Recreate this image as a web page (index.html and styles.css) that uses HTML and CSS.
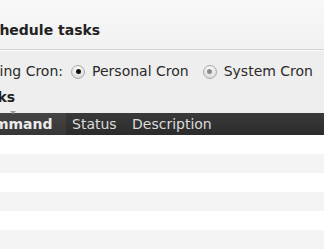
FILE: index.html
```html
<!DOCTYPE html>
<html>
<head>
    <title>Schedule tasks</title>
    <link rel="stylesheet" href="styles.css">
</head>
<body>
    <div class="page">
        <!-- Page header -->
        <div class="top">
            <h2 class="title">Schedule tasks</h2>
        </div>

        <!-- Cron type choice -->
        <div class="cron-row">
            <span class="cron-label">Using Cron:</span>
            <label class="opt"><span class="radio on"></span>Personal Cron</label>
            <label class="opt"><span class="radio"></span>System Cron</label>
        </div>

        <!-- Task list -->
        <h3 class="tasks">Tasks</h3>
        <table class="task-table">
            <thead>
                <tr>
                    <th class="col-cmd sorted"><span class="sort-text">Command<span class="sort-arrow"></span></span></th>
                    <th class="col-status">Status</th>
                    <th class="col-desc">Description</th>
                </tr>
            </thead>
            <tbody>
                <tr><td></td><td></td><td></td></tr>
                <tr><td></td><td></td><td></td></tr>
                <tr><td></td><td></td><td></td></tr>
                <tr><td></td><td></td><td></td></tr>
                <tr><td></td><td></td><td></td></tr>
                <tr><td></td><td></td><td></td></tr>
                <tr><td></td><td></td><td></td></tr>
            </tbody>
        </table>
    </div>
</body>
</html>
```

FILE: styles.css
```css
/* Global styles */
body {
    margin: 0;
    font-family: "DejaVu Sans", Verdana, sans-serif;
    font-size: 14px;
    line-height: 17px;
    color: #222;
    background-color: #eeeeee;
    overflow: hidden;
}

/* page is scrolled a little to the right */
.page {
    margin-left: -40px;
    width: 420px;
}

/* Header area */
.top {
    background: linear-gradient(#f8f8f8, #f1f1f1);
    border-bottom: 1px solid #d4d4d4;
    box-shadow: 0 1px 0 #fafafa;
    padding: 22px 0 10px 21px;
}

.title {
    margin: 0;
    font-size: 14px;
    font-weight: bold;
    color: #222;
}

/* Cron choice row */
.cron-row {
    display: flex;
    align-items: center;
    padding: 13px 0 0 22px;
    color: #2a2a2a;
}

.opt {
    display: flex;
    align-items: center;
    gap: 7px;
    margin-left: 8px;
}

.opt + .opt {
    margin-left: 14px;
}

.radio {
    width: 12px;
    height: 12px;
    border-radius: 50%;
    border: 1px solid #aaa;
    background: radial-gradient(circle at 50% 30%, #ffffff, #cfcfcf);
    display: flex;
    align-items: center;
    justify-content: center;
}

.radio::after {
    content: "";
    width: 5px;
    height: 5px;
    border-radius: 50%;
    background-color: #8a8a8a;
}

.radio.on::after {
    background-color: #111;
}

/* Tasks heading */
.tasks {
    margin: 9px 0 7px 12px;
    font-size: 14px;
    font-weight: bold;
    color: #222;
}

/* Table styling */
.task-table {
    width: 100%;
    border-collapse: collapse;
}

.task-table th {
    height: 22px;
    padding: 0 6px;
    text-align: left;
    font-weight: normal;
    color: #dcdcdc;
    background: linear-gradient(#3a3a3a, #2b2b2b);
    white-space: nowrap;
}

.task-table th.sorted {
    font-weight: bold;
    color: #ececec;
    background: linear-gradient(#454545, #363636);
}

.col-cmd {
    width: 86px;
    padding-left: 14px !important;
}

.col-status {
    width: 48px;
}

.sort-text {
    position: relative;
}

.sort-arrow {
    position: absolute;
    left: 50%;
    top: -5px;
    margin-left: -3px;
    border-left: 3px solid transparent;
    border-right: 3px solid transparent;
    border-top: 3px solid #9a9a9a;
}

.task-table td {
    height: 19px;
    padding: 0;
    background-color: #ffffff;
}

.task-table tbody tr:nth-child(even) td {
    background-color: #f4f4f4; /* Zebra striping */
}
```
